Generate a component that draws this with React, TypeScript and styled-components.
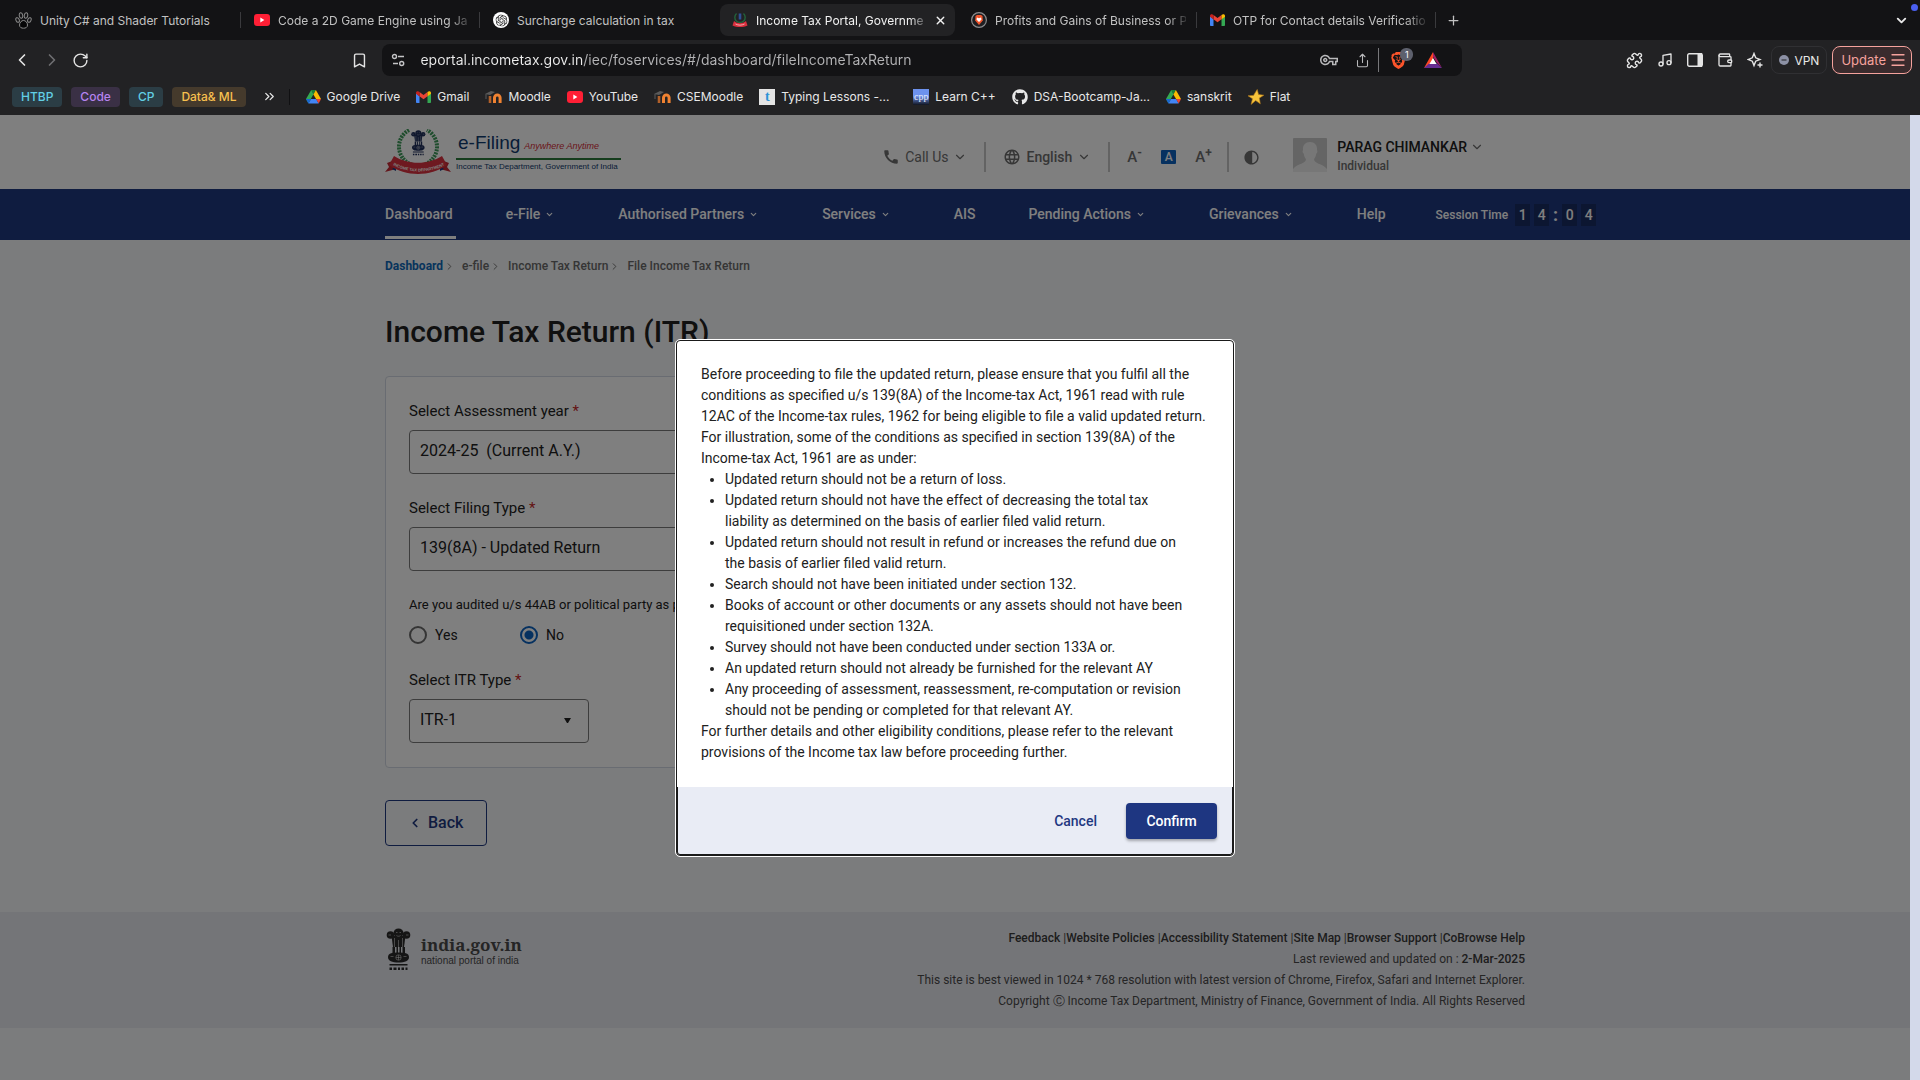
import React from "react";
import styled, { createGlobalStyle, css } from "styled-components";
import {
  Bookmark,
  ChevronDown,
  ChevronLeft,
  ChevronRight,
  ChevronsRight,
  Menu,
  Music,
  Plus,
  Puzzle,
  RotateCw,
  Share,
  Wallet,
  X,
} from "lucide-react";
import { MdCall, MdContrast, MdLanguage, MdOutlineVpnKey } from "react-icons/md";
import { FaGithub } from "react-icons/fa";
import { SiBrave, SiOpenai } from "react-icons/si";

const ui = `Inter, "Liberation Sans", sans-serif`;
const site = `Roboto, "Liberation Sans", sans-serif`;

const GlobalStyle = createGlobalStyle`
  *, *::before, *::after { box-sizing: border-box; }
  body { margin: 0; background: #222224; font-family: ${site}; }
  button, input, select { font: inherit; color: inherit; margin: 0; }
  button { background: none; border: 0; padding: 0; cursor: pointer; }
  a { color: inherit; text-decoration: none; }
  svg { display: block; flex: none; }
`;

const Shell = styled.div`
  display: flex;
  flex-direction: column;
  min-height: 100vh;
`;

/* ---------- browser chrome ---------- */

const Chrome = styled.header`
  font-family: ${ui};
  color: #e8e8e8;
  font-size: 12px;
`;

const TabStrip = styled.div`
  display: flex;
  align-items: center;
  height: 40px;
  padding-left: 3px;
  background: #131315;
`;

const Tab = styled.button<{ $active?: boolean; $line?: boolean }>`
  position: relative;
  display: flex;
  align-items: center;
  gap: 8px;
  width: 235px;
  height: 32px;
  margin: 0 4px 0 0;
  padding: 0 8px 0 12px;
  border-radius: 8px;
  color: ${(p) => (p.$active ? "#f2f2f2" : "#c2c2c2")};
  background: ${(p) => (p.$active ? "#222224" : "transparent")};
  ${(p) =>
    p.$line &&
    css`
      &::after {
        content: "";
        position: absolute;
        right: -3px;
        top: 8px;
        width: 1px;
        height: 16px;
        background: #3a3a3d;
      }
    `}
`;

const TabTitle = styled.span<{ $fade?: boolean }>`
  flex: 1;
  min-width: 0;
  white-space: nowrap;
  text-align: left;
  ${(p) => p.$fade && "mask-image: linear-gradient(90deg, #000 90%, rgba(0, 0, 0, 0.2));"}
`;

const NewTab = styled.button`
  display: flex;
  margin-left: 9px;
  color: #c2c2c2;
`;

const TabSearch = styled.button`
  position: relative;
  display: flex;
  margin: 0 11px 0 auto;
  &::after {
    content: "";
    position: absolute;
    right: -9px;
    top: -9px;
    width: 7px;
    height: 7px;
    border-radius: 50%;
    background: #4a5ff0;
  }
`;

const Toolbar = styled.div`
  display: flex;
  align-items: center;
  height: 40px;
  background: #222224;
`;

const NavButtons = styled.div`
  display: flex;
  align-items: center;
  gap: 10px;
  padding-left: 12px;
`;

const IconButton = styled.button<{ $faint?: boolean }>`
  display: flex;
  color: ${(p) => (p.$faint ? "#6f6f72" : "#e4e4e4")};
`;

const BookmarkButton = styled(IconButton)`
  margin: 0 14px 0 auto;
`;

const AddressBar = styled.div`
  display: flex;
  align-items: center;
  width: 1080px;
  height: 32px;
  padding: 0 20px 0 9px;
  border-radius: 8px;
  background: #131315;
  color: #b9b9bb;
`;

const Address = styled.input`
  flex: 1;
  min-width: 0;
  margin: 0 14px;
  padding: 0 0 1px;
  border: 0;
  outline: 0;
  font-size: 14px;
  color: transparent;
  background: linear-gradient(90deg, #ececec 162px, #b4b4b6 162px);
  background-clip: text;
`;

const AddressActions = styled.div`
  display: flex;
  align-items: center;
  gap: 17px;
`;

const Shield = styled.button`
  position: relative;
  display: flex;
  align-items: center;
  height: 24px;
  padding-left: 11px;
  margin-left: -9px;
  border-left: 1px solid #77777a;
  color: #fb542b;
`;

const ShieldCount = styled.span`
  position: absolute;
  right: -6px;
  top: 0;
  width: 13px;
  border-radius: 6px;
  background: #5d606d;
  color: #fff;
  font-size: 9px;
  line-height: 13px;
  text-align: center;
`;

const Extensions = styled.div`
  display: flex;
  flex: none;
  align-items: center;
  gap: 14px;
  margin-left: 164px;
  padding-right: 8px;
`;

const Vpn = styled.button`
  display: flex;
  align-items: center;
  gap: 5px;
  height: 28px;
  margin-left: -6px;
  padding: 0 7px;
  border: 1px solid #303033;
  border-radius: 8px;
`;

const Update = styled.button`
  display: flex;
  align-items: center;
  gap: 3px;
  height: 28px;
  margin-left: -9px;
  padding: 0 4px 0 8px;
  border: 1px solid #f5a29d;
  border-radius: 8px;
  background: #3a2b2d;
  color: #f5a29d;
  font-size: 13px;
`;

const BookmarkBar = styled.nav`
  display: flex;
  align-items: center;
  height: 35px;
  padding: 0 12px 2px;
  gap: 16px;
  background: #222224;
`;

const Folders = styled.div`
  display: flex;
  gap: 9px;
`;

const tones = {
  cyan: ["#2b3d45", "#62cfe4"],
  violet: ["#3a3045", "#b583ee"],
  amber: ["#453a2c", "#f8c04f"],
};

const Folder = styled.button<{ $tone: keyof typeof tones }>`
  height: 20px;
  padding: 0 9px;
  border-radius: 4px;
  font-weight: 500;
  background: ${(p) => tones[p.$tone][0]};
  color: ${(p) => tones[p.$tone][1]};
`;

const MoreFolders = styled.button`
  display: flex;
  align-items: center;
  height: 16px;
  padding-right: 12px;
  border-right: 1px solid #101012;
`;

const BookmarkLink = styled.a<{ $wide?: boolean }>`
  display: flex;
  align-items: center;
  gap: 6px;
  min-width: ${(p) => (p.$wide ? "138px" : "auto")};
  white-space: nowrap;
`;

/* ---------- portal ---------- */

const Viewport = styled.div`
  flex: 1;
  display: flex;
`;

const Page = styled.div`
  position: relative;
  flex: 1;
  display: flex;
  flex-direction: column;
  background: #f6f8fa;
  color: #212121;
`;

const ScrollTrack = styled.div`
  width: 10px;
  background: #d3d9ea;
`;

const Container = styled.div`
  width: 100%;
  max-width: 1140px;
  margin: 0 auto;
`;

const SiteHeader = styled.header`
  background: #fff;
`;

const HeaderRow = styled(Container)`
  display: flex;
  align-items: center;
  height: 74px;
`;

const Brand = styled.a`
  display: flex;
  align-items: center;
  gap: 5px;
`;

const BrandText = styled.div`
  width: 165px;
  font-family: "Liberation Sans", sans-serif;
  white-space: nowrap;
`;

const BrandTop = styled.div`
  display: flex;
  align-items: baseline;
  gap: 4px;
  padding-left: 2px;
  border-bottom: 2px solid #2a7a3a;
  color: #0f3a6e;
  font-size: 19px;
  line-height: 24px;
  em { color: #d42a35; font-size: 9px; }
`;

const BrandSub = styled.div`
  color: #0f3a6e;
  font-size: 8px;
  line-height: 14px;
`;

const Tools = styled.div`
  display: flex;
  align-items: center;
  gap: 17px;
  margin: 10px 41px 0 auto;
  color: #6e6e6e;
  font-size: 14px;
  line-height: 20px;
`;

const Tool = styled.button<{ $bold?: boolean }>`
  display: flex;
  align-items: center;
  gap: 5px;
  font-weight: ${(p) => (p.$bold ? 500 : 400)};
`;

const ContrastTool = styled(Tool)`
  margin-left: -3px;
`;

const Separator = styled.span`
  width: 2px;
  height: 30px;
  background: #c6c6c6;
`;

const FontSizes = styled.div`
  display: flex;
  align-items: center;
  gap: 19px;
`;

const SizeButton = styled.button<{ $on?: boolean }>`
  width: 15px;
  font-size: ${(p) => (p.$on ? 12 : 15)}px;
  line-height: 14px;
  font-weight: 500;
  white-space: nowrap;
  text-align: left;
  ${(p) => p.$on && "text-align: center; color: #fff; background: #0d63c0; border-radius: 1px;"}
  sup { font-size: 12px; font-weight: 700; line-height: 0; vertical-align: 5px; }
`;

const Profile = styled.div`
  display: flex;
  align-items: flex-start;
  gap: 10px;
  margin-left: 16px;
`;

const ProfileName = styled.button`
  display: flex;
  align-items: center;
  gap: 3px;
  color: #212121;
  font-size: 14px;
  font-weight: 500;
  line-height: 18px;
`;

const ProfileRole = styled.div`
  font-size: 12px;
  font-weight: 500;
  line-height: 20px;
`;

const MainNav = styled.nav`
  background: #1f3881;
`;

const NavRow = styled(Container)`
  display: flex;
  align-items: stretch;
  height: 51px;
  gap: 50px;
  white-space: nowrap;
  color: #fff;
  font-size: 14px;
  font-weight: 500;
`;

const NavItem = styled.a<{ $current?: boolean; $menu?: boolean }>`
  display: flex;
  align-items: center;
  gap: 5px;
  flex: none;
  padding: 3px ${(p) => (p.$menu ? 14 : 3)}px 0 0;
  border-bottom: 3px solid ${(p) => (p.$current ? "#fff" : "transparent")};
  margin-bottom: 1px;
`;

const Session = styled.div`
  display: flex;
  align-items: center;
  gap: 4px;
  flex: none;
  margin-left: -3px;
  font-size: 12px;
`;

const Digit = styled.span`
  width: 15px;
  background: #182c63;
  font-size: 14px;
  line-height: 22px;
  text-align: center;
`;

const Colon = styled.span`
  width: 5px;
  font-size: 18px;
  font-weight: 700;
`;

const Main = styled(Container).attrs({ as: "main" })`
  flex: 1;
`;

const Crumbs = styled.nav`
  display: flex;
  align-items: center;
  padding: 17px 0 16px;
  color: #6b6b6b;
  font-size: 12px;
  font-weight: 500;
  line-height: 18px;
  svg { margin: 0 7px 0 1px; }
  a:first-child { color: #0f69b9; font-weight: 700; }
`;

const Title = styled.h1`
  margin: 20px 0 24px;
  font-size: 30px;
  font-weight: 500;
  line-height: 41px;
`;

const Card = styled.section`
  width: 760px;
  max-width: 100%;
  padding: 24px 23px;
  border: 1px solid #d2d9e4;
  border-radius: 4px;
  background: #fff;
`;

const Field = styled.div`
  margin-bottom: 24px;
  &:last-child { margin-bottom: 0; }
`;

const Label = styled.label`
  display: block;
  margin-bottom: 9px;
  font-size: 15px;
  line-height: 20px;
  span { color: #c62828; }
`;

const SelectBox = styled.div<{ $short?: boolean }>`
  position: relative;
  width: ${(p) => (p.$short ? "180px" : "360px")};
  svg { position: absolute; right: 18px; top: 19px; }
`;

const Select = styled.select`
  width: 100%;
  height: 44px;
  padding: 0 10px 3px;
  appearance: none;
  border: 1px solid #7b7b7b;
  border-radius: 4px;
  background: #fff;
  font-size: 16px;
`;

const RadioGroup = styled.fieldset`
  margin: 0 0 25px;
  padding: 0;
  border: 0;
  legend { padding: 0; margin-bottom: 10px; font-size: 13px; line-height: 20px; }
`;

const Radios = styled.div`
  display: flex;
  gap: 60px;
`;

const RadioLabel = styled.label`
  display: flex;
  align-items: center;
  gap: 8px;
  font-size: 14px;
  line-height: 20px;
  width: 51px;
`;

const Radio = styled.input`
  flex: none;
  width: 18px;
  height: 18px;
  appearance: none;
  border: 2px solid #6b6b6b;
  border-radius: 50%;
  &:checked {
    border-color: #0d63c0;
    background: radial-gradient(circle, #0d63c0 4px, transparent 5px);
  }
`;

const BackButton = styled.button`
  display: flex;
  align-items: center;
  gap: 6px;
  height: 46px;
  margin: 32px 0;
  padding: 0 23px 1px 22px;
  border: 1px solid #1f3881;
  border-radius: 4px;
  color: #1f3881;
  font-size: 16px;
  font-weight: 500;
`;

const Footer = styled.footer`
  margin-bottom: 52px;
  background: #e9eaf1;
  color: #4b4b4b;
`;

const FooterRow = styled(Container)`
  display: flex;
  align-items: flex-start;
  justify-content: space-between;
  min-height: 116px;
  padding: 16px 0 0;
`;

const IndiaLink = styled.a`
  display: flex;
  align-items: center;
  gap: 9px;
  font: 10px/14px "Liberation Sans", sans-serif;
  span { padding-top: 5px; }
  strong { display: block; font: bold 17px/18px "Noto Serif", "Liberation Serif", serif; }
`;

const FooterText = styled.div`
  font-size: 12px;
  line-height: 21px;
  text-align: right;
  a, b { font-weight: 500; color: #3a3a3a; }
  p { margin: 0; }
`;

/* ---------- dialog ---------- */

const Backdrop = styled.div`
  position: absolute;
  inset: 0;
  display: flex;
  align-items: center;
  justify-content: center;
  background: rgba(0, 0, 0, 0.5);
`;

const Dialog = styled.div`
  width: 558px;
  border: 1px solid #1a1a1a;
  border-radius: 4px;
  outline: 1px solid #fff;
  background: #fff;
`;

const DialogBody = styled.div`
  padding: 23px 16px 24px 24px;
  font-size: 14px;
  line-height: 21px;
  white-space: nowrap;
  p { margin: 0; }
  ul { margin: 0; padding-left: 24px; }
`;

const DialogActions = styled.div`
  display: flex;
  align-items: center;
  justify-content: flex-end;
  gap: 29px;
  padding: 16px 15px 15px;
  border: 1px solid #1a1a1a;
  border-top: 0;
  border-radius: 0 0 3px 3px;
  background: #e9ecf5;
  font-size: 14px;
  font-weight: 500;
`;

const Cancel = styled.button`
  color: #1f3881;
`;

const Confirm = styled.button`
  width: 91px;
  height: 36px;
  border-radius: 4px;
  background: #1e3681;
  color: #fff;
  box-shadow: 0 2px 3px rgba(0, 0, 0, 0.3);
`;

/* ---------- drawings ---------- */

const YouTubeIcon = () => (
  <svg width="16" height="12" viewBox="0 0 16 12">
    <rect width="16" height="12" rx="3" fill="#ff1f35" />
    <path d="M6.3 3.6v4.8L10.4 6z" fill="#fff" />
  </svg>
);

const GmailIcon = () => (
  <svg width="15" height="12" viewBox="0 0 15 12">
    <path d="M0 2v9.2c0 .5.4.8.8.8h2.700V5.2z" fill="#4285f4" />
    <path d="M15 2v9.2c0 .5-.4.8-.8.8h-2.700V5.2z" fill="#34a853" />
    <path d="M3.500 5.200V1L7.500 4.100 11.500 1v4.200L7.500 8.300z" fill="#ea4335" />
    <path d="M0 2C0 .2 2 -.3 3.500 1v4.400L0 2.800z" fill="#c5221f" />
    <path d="M15 2c0-1.800-2-2.300-3.500-1v4.400L15 2.800z" fill="#fbbc04" />
  </svg>
);

const DriveIcon = () => (
  <svg width="15" height="14" viewBox="0 0 15 14">
    <path d="M5.200 0h4.700L7.500 4.500z" fill="#188038" />
    <path d="M5.200 0 0 9l2.400 4.300 5.100-9z" fill="#34a853" />
    <path d="M9.900 0 15 9h-4.900L7.400 4.400z" fill="#fbbc04" />
    <path d="M5 9h5.100l2.600 4.600H2.400z" fill="#4285f4" />
    <path d="M10.100 9H15l-2.300 4.600z" fill="#ea4335" />
    <path d="M0 9h5l-2.600 4.600z" fill="#1967d2" />
  </svg>
);

const MoodleIcon = () => (
  <svg width="17" height="14" viewBox="0 0 17 14" fill="none">
    <path d="M5 13V6" stroke="#b0602a" strokeWidth="2.600" />
    <path d="M9.500 13V7.800a2.800 2.800 0 0 1 5.600 0V13" stroke="#f08231" strokeWidth="3" />
    <path d="M0 4 6 1l4 1-5 3z" fill="#5a5a5a" />
    <path d="M1 4v5" stroke="#5a5a5a" />
  </svg>
);

const PawIcon = () => (
  <svg width="17" height="17" viewBox="0 0 17 17" fill="none" stroke="#8a8a8a" strokeWidth="1">
    <path d="M8.500 8.500c2 0 4 2 4 4.500 0 2.500-2 3.200-4 3.200S4.500 15.500 4.500 13c0-2.500 2-4.500 4-4.500z" fill="#060607" />
    <ellipse cx="2.600" cy="8" rx="1.600" ry="2.400" transform="rotate(-25 2.600 8)" />
    <ellipse cx="6" cy="3.500" rx="1.700" ry="2.800" transform="rotate(-10 6 3.500)" />
    <ellipse cx="11" cy="3.500" rx="1.700" ry="2.800" transform="rotate(10 11 3.500)" />
    <ellipse cx="14.400" cy="8" rx="1.600" ry="2.400" transform="rotate(25 14.400 8)" />
  </svg>
);

const ChatIcon = () => (
  <svg width="16" height="16" viewBox="0 0 16 16">
    <circle cx="8" cy="8" r="8" fill="#fff" />
    <SiOpenai x="2.500" y="2.500" width="11" height="11" color="#222" />
  </svg>
);

const PortalIcon = () => (
  <svg width="16" height="16" viewBox="0 0 16 16" fill="none">
    <path d="M4.500 1.500a5.200 5.200 0 1 0 7 0" stroke="#23633c" strokeWidth="1.400" />
    <path d="M8 1.500v6" stroke="#2f4f96" strokeWidth="2.600" />
    <path d="M2 9c3.500 3 8.500 3 12 0l1.500 4.500c-4.500 2-10.500 2-15 0z" fill="#d92f3d" />
    <path d="M3.500 12c3 1.500 6 1.500 9 0" stroke="#f7c9cc" strokeWidth=".8" />
  </svg>
);

const LionIcon = () => (
  <svg width="16" height="16" viewBox="0 0 16 16">
    <circle cx="8" cy="8" r="7.400" fill="#1f1f22" stroke="#8c8c8e" strokeWidth="1.200" />
    <path d="M4.500 4 6 3h4l1.500 1 .3 4.500L8 13 4.200 8.500z" fill="#f2552c" />
    <path d="m6 5.500 2 .7 2-.7.500 2L8 10 5.500 7.500z" fill="#fff" />
  </svg>
);

const TuneIcon = () => (
  <svg width="15" height="14" viewBox="0 0 15 14" fill="none" stroke="#c4c4c6" strokeWidth="1.400">
    <circle cx="3.500" cy="3.500" r="2" />
    <path d="M7 3.500h6M2 10.500h5" />
    <circle cx="10.700" cy="10.500" r="2" />
  </svg>
);

const TriangleIcon = () => (
  <svg width="18" height="16" viewBox="0 0 18 16">
    <path d="M9 0 0 16l9-5z" fill="#ff4724" />
    <path d="M9 0v5l4 6 5 5z" fill="#9e1f63" />
    <path d="M0 16h18l-5-4.500H5z" fill="#662d91" />
    <path d="m9 6 3.600 6H5.400z" fill="#fff" />
  </svg>
);

const PanelIcon = () => (
  <svg width="16" height="14" viewBox="0 0 16 14">
    <rect x=".7" y=".7" width="14.600" height="12.600" rx="1.500" fill="none" stroke="#e4e4e4" strokeWidth="1.400" />
    <path d="M10.500 0H15v14h-4.500z" fill="#e4e4e4" />
  </svg>
);

const SparkIcon = () => (
  <svg width="16" height="16" viewBox="0 0 16 16" fill="none" stroke="#e4e4e4" strokeWidth="1.400">
    <path d="M7 1.500 8.700 5.800 13 7.500 8.700 9.200 7 13.500 5.300 9.200 1 7.500 5.300 5.800z" />
    <path d="M13 10.500v5M10.500 13h5" />
  </svg>
);

const VpnDot = () => (
  <svg width="10" height="10" viewBox="0 0 10 10">
    <circle cx="5" cy="5" r="5" fill="#8c91a5" />
    <path d="M2.500 5h5" stroke="#3a3b42" strokeWidth="1.300" />
  </svg>
);

const StarIcon = () => (
  <svg width="16" height="16" viewBox="0 0 16 16">
    <path d="m9.200.5 1.300 5 5.300.7-4.500 2.900 1 5.700-4.600-3.200-4.600 3.800 1.400-5.700L0 6.800l5.500-.4z" fill="#f6c33b" stroke="#b97d1d" strokeWidth=".6" />
  </svg>
);

const TileIcon = styled.span<{ $cpp?: boolean }>`
  width: 16px;
  height: 16px;
  background: ${(p) => (p.$cpp ? "linear-gradient(#6d92ee 45%, #10141f)" : "#e4e4e4")};
  color: ${(p) => (p.$cpp ? "#e9eefc" : "#2c93d6")};
  font: ${(p) => (p.$cpp ? "10px/15px" : "bold 14px/15px")} "Liberation Serif", serif;
  text-align: center;
`;

const Lions = ({ color }: { color: string }) => (
  <g fill={color}>
    <ellipse cx="13" cy="5" rx="5" ry="4.600" />
    <circle cx="5" cy="7" r="3.800" />
    <circle cx="21" cy="7" r="3.800" />
    <path d="M6 8h14l-1.500 11h-11z" />
    <path d="M2.500 29c0-4 5-4.500 10.500-4.500S23.500 25 23.500 29s-4 5.500-10.500 5.500S2.500 33 2.500 29z" />
    <path d="M7 19h2.500v6H7zM11 19h1.500v6H11zM14 19h1.500v6H14zM17 19h2.500v6H17z" />
    <path d="M4 36h18v1.500H4zM4 39.500h2.500v2.500H4zM8 39.500h3v2.500H8zM12.500 39.500h2v2.500h-2zM16 39.500h2.500v2.500H16zM20 39.500h2v2.500h-2z" />
    <g stroke="#fff" strokeOpacity=".55" strokeWidth=".9" fill="none">
      <path d="M9 10v9M13 12v9M17 10v9M10.500 4.500h1.500M14 4.500h1.500M11 7.500c1.300 1 2.700 1 4 0M3 7h2.500M20.500 7H23" />
      <circle cx="13" cy="29.500" r="2.700" />
      <path d="M13 27v5M10.500 29.500h5M5 28.500h3M18 28.500h3" />
    </g>
  </g>
);

const Emblem = () => (
  <svg width="66" height="46" viewBox="0 0 66 46">
    <path d="M24 1a19 19 0 1 0 18 0" fill="none" stroke="#3f9a5b" strokeWidth="4" strokeDasharray="2 1" />
    <g transform="translate(25.500 1) scale(.6)">
      <Lions color="#20305c" />
    </g>
    <path d="M0 43l4-5-2-4 8-3 1 9zM66 43l-4-5 2-4-8-3-1 9z" fill="#c62a35" />
    <path d="m7 40 4 2V37zM59 40l-4 2V37z" fill="#1d3d86" />
    <path d="M9 27c14 9 34 9 48 0l5 9c-17 12-41 12-58 0z" fill="#dc3340" />
    <path id="ribbon" d="M8 36c15 8.500 36 8.500 52 0" fill="none" />
    <text fill="#fff" fontFamily="Liberation Sans, sans-serif" fontWeight="bold" fontSize="4">
      <textPath href="#ribbon">INCOME TAX DEPARTMENT</textPath>
    </text>
  </svg>
);

const StateEmblem = () => (
  <svg width="27" height="43" viewBox="0 0 26 43">
    <Lions color="#2b2b2b" />
  </svg>
);

const Avatar = () => (
  <svg width="34" height="34" viewBox="0 0 34 34">
    <rect width="34" height="34" rx="1" fill="#cacaca" />
    <path d="M17 4c4.500 0 7.500 3 7 8 .8 1 .4 3-.7 3.500-.5 3-1.300 4.500-2.300 5.500 0 5 8 4 13 10v3H0v-3c5-6 13-5 13-10-1-1-1.800-2.500-2.300-5.500C9.600 15 9.200 13 10 12c-.5-5 2.500-8 7-8z" fill="#efefef" />
  </svg>
);

/* ---------- data ---------- */

const tabs = [
  { title: "Unity C# and Shader Tutorials", icon: <PawIcon />, line: true },
  { title: "Code a 2D Game Engine using Ja", icon: <YouTubeIcon />, line: true, fade: true },
  { title: "Surcharge calculation in tax", icon: <ChatIcon /> },
  { title: "Income Tax Portal, Governme", icon: <PortalIcon />, active: true, fade: true },
  { title: "Profits and Gains of Business or P", icon: <LionIcon />, line: true, fade: true },
  { title: "OTP for Contact details Verificatio", icon: <GmailIcon />, line: true, fade: true },
];

const bookmarks = [
  { title: "Google Drive", icon: <DriveIcon /> },
  { title: "Gmail", icon: <GmailIcon /> },
  { title: "Moodle", icon: <MoodleIcon /> },
  { title: "YouTube", icon: <YouTubeIcon /> },
  { title: "CSEMoodle", icon: <MoodleIcon /> },
  { title: "Typing Lessons -...", icon: <TileIcon>t</TileIcon>, wide: true },
  { title: "Learn C++", icon: <TileIcon $cpp>cpp</TileIcon> },
  { title: "DSA-Bootcamp-Ja...", icon: <FaGithub size={16} /> },
  { title: "sanskrit", icon: <DriveIcon /> },
  { title: "Flat", icon: <StarIcon /> },
];

const navItems = [
  { title: "Dashboard", current: true },
  { title: "e-File", menu: true },
  { title: "Authorised Partners", menu: true },
  { title: "Services", menu: true },
  { title: "AIS" },
  { title: "Pending Actions", menu: true },
  { title: "Grievances", menu: true },
  { title: "Help" },
];

const footerLinks = [
  "Feedback",
  "Website Policies",
  "Accessibility Statement",
  "Site Map",
  "Browser Support",
  "CoBrowse Help",
];

const conditions = [
  ["Updated return should not be a return of loss."],
  ["Updated return should not have the effect of decreasing the total tax", "liability as determined on the basis of earlier filed valid return."],
  ["Updated return should not result in refund or increases the refund due on", "the basis of earlier filed valid return."],
  ["Search should not have been initiated under section 132."],
  ["Books of account or other documents or any assets should not have been", "requisitioned under section 132A."],
  ["Survey should not have been conducted under section 133A or."],
  ["An updated return should not already be furnished for the relevant AY"],
  ["Any proceeding of assessment, reassessment, re-computation or revision", "should not be pending or completed for that relevant AY."],
];

const Lines = ({ of }: { of: string[] }) => (
  <>
    {of.map((line, i) => (
      <React.Fragment key={line}>
        {i > 0 && <br />}
        {line}
      </React.Fragment>
    ))}
  </>
);

const BrowserChrome = () => (
  <Chrome>
    <TabStrip>
      {tabs.map((t) => (
        <Tab key={t.title} $active={t.active} $line={t.line}>
          {t.icon}
          <TabTitle $fade={t.fade}>{t.title}</TabTitle>
          {t.active && <X size={13} strokeWidth={2.5} />}
        </Tab>
      ))}
      <NewTab aria-label="New tab"><Plus size={15} /></NewTab>
      <TabSearch aria-label="Search tabs"><ChevronDown size={15} strokeWidth={3} /></TabSearch>
    </TabStrip>
    <Toolbar>
      <NavButtons>
        <IconButton aria-label="Back"><ChevronLeft size={20} /></IconButton>
        <IconButton aria-label="Forward" $faint><ChevronRight size={20} /></IconButton>
        <IconButton aria-label="Reload"><RotateCw size={17} /></IconButton>
      </NavButtons>
      <BookmarkButton aria-label="Bookmark this page"><Bookmark size={17} /></BookmarkButton>
      <AddressBar>
        <TuneIcon />
        <Address aria-label="Address" defaultValue="eportal.incometax.gov.in/iec/foservices/#/dashboard/fileIncomeTaxReturn" />
        <AddressActions>
          <MdOutlineVpnKey size={18} />
          <Share size={15} strokeWidth={1.7} />
          <Shield aria-label="Shields">
            <SiBrave size={17} />
            <ShieldCount>1</ShieldCount>
          </Shield>
          <TriangleIcon />
        </AddressActions>
      </AddressBar>
      <Extensions>
        <IconButton aria-label="Extensions"><Puzzle size={17} /></IconButton>
        <IconButton aria-label="Media"><Music size={16} /></IconButton>
        <IconButton aria-label="Side panel"><PanelIcon /></IconButton>
        <IconButton aria-label="Wallet"><Wallet size={16} /></IconButton>
        <IconButton aria-label="Assistant"><SparkIcon /></IconButton>
        <Vpn><VpnDot />VPN</Vpn>
        <Update>Update<Menu size={18} strokeWidth={1.7} /></Update>
      </Extensions>
    </Toolbar>
    <BookmarkBar>
      <Folders>
        <Folder $tone="cyan">HTBP</Folder>
        <Folder $tone="violet">Code</Folder>
        <Folder $tone="cyan">CP</Folder>
        <Folder $tone="amber">Data&amp; ML</Folder>
      </Folders>
      <MoreFolders aria-label="More folders"><ChevronsRight size={15} /></MoreFolders>
      {bookmarks.map((b) => (
        <BookmarkLink key={b.title} href="#" $wide={b.wide}>{b.icon}{b.title}</BookmarkLink>
      ))}
    </BookmarkBar>
  </Chrome>
);

const PortalHeader = () => (
  <SiteHeader>
    <HeaderRow>
      <Brand href="#">
        <Emblem />
        <BrandText>
          <BrandTop>e-Filing <em>Anywhere Anytime</em></BrandTop>
          <BrandSub>Income Tax Department, Government of India</BrandSub>
        </BrandText>
      </Brand>
      <Tools>
        <Tool><MdCall size={18} />Call Us<ChevronDown size={14} /></Tool>
        <Separator />
        <Tool $bold><MdLanguage size={18} />English<ChevronDown size={14} /></Tool>
        <Separator />
        <FontSizes>
          <SizeButton>A<sup>-</sup></SizeButton>
          <SizeButton $on>A</SizeButton>
          <SizeButton>A<sup>+</sup></SizeButton>
        </FontSizes>
        <Separator />
        <ContrastTool aria-label="Contrast"><MdContrast size={17} /></ContrastTool>
        <Profile>
          <Avatar />
          <div>
            <ProfileName>PARAG CHIMANKAR<ChevronDown size={14} color="#6e6e6e" /></ProfileName>
            <ProfileRole>Individual</ProfileRole>
          </div>
        </Profile>
      </Tools>
    </HeaderRow>
  </SiteHeader>
);

export default function App() {
  return (
    <Shell>
      <GlobalStyle />
      <BrowserChrome />
      <Viewport>
        <Page>
          <PortalHeader />
          <MainNav>
            <NavRow>
              {navItems.map((n) => (
                <NavItem key={n.title} href="#" $current={n.current} $menu={n.menu}>
                  {n.title}
                  {n.menu && <ChevronDown size={9} strokeWidth={3} />}
                </NavItem>
              ))}
              <Session>
                Session Time&nbsp;
                <Digit>1</Digit>
                <Digit>4</Digit>
                <Colon>:</Colon>
                <Digit>0</Digit>
                <Digit>4</Digit>
              </Session>
            </NavRow>
          </MainNav>
          <Main>
            <Crumbs>
              <a href="#">Dashboard</a>
              <ChevronRight size={11} />
              <a href="#">e-file</a>
              <ChevronRight size={11} />
              <a href="#">Income Tax Return</a>
              <ChevronRight size={11} />
              <span>File Income Tax Return</span>
            </Crumbs>
            <Title>Income Tax Return (ITR)</Title>
            <Card>
              <Field>
                <Label htmlFor="year">Select Assessment year <span>*</span></Label>
                <SelectBox>
                  <Select id="year"><option>{"2024-25\u00a0 (Current A.Y.)"}</option></Select>
                </SelectBox>
              </Field>
              <Field>
                <Label htmlFor="filing">Select Filing Type <span>*</span></Label>
                <SelectBox>
                  <Select id="filing"><option>139(8A) - Updated Return</option></Select>
                </SelectBox>
              </Field>
              <RadioGroup>
                <legend>Are you audited u/s 44AB or political party as per</legend>
                <Radios>
                  <RadioLabel><Radio type="radio" name="audit" />Yes</RadioLabel>
                  <RadioLabel><Radio type="radio" name="audit" defaultChecked />No</RadioLabel>
                </Radios>
              </RadioGroup>
              <Field>
                <Label htmlFor="itr">Select ITR Type <span>*</span></Label>
                <SelectBox $short>
                  <Select id="itr"><option>ITR-1</option></Select>
                  <svg width="7" height="5" viewBox="0 0 7 5"><path d="M0 0h7L4 5H3z" fill="#212121" /></svg>
                </SelectBox>
              </Field>
            </Card>
            <BackButton><ChevronLeft size={14} strokeWidth={3} />Back</BackButton>
          </Main>
          <Footer>
            <FooterRow>
              <IndiaLink href="#">
                <StateEmblem />
                <span><strong>india.gov.in</strong>national portal of india</span>
              </IndiaLink>
              <FooterText>
                <p>
                  {footerLinks.map((l, i) => (
                    <React.Fragment key={l}>{i > 0 && " |"}<a href="#">{l}</a></React.Fragment>
                  ))}
                </p>
                <p>Last reviewed and updated on : <b>2-Mar-2025</b></p>
                <p>This site is best viewed in 1024 * 768 resolution with latest version of Chrome, Firefox, Safari and Internet Explorer.</p>
                <p>Copyright Ⓒ Income Tax Department, Ministry of Finance, Government of India. All Rights Reserved</p>
              </FooterText>
            </FooterRow>
          </Footer>
          <Backdrop>
            <Dialog role="dialog" aria-modal="true">
              <DialogBody>
                <p>
                  <Lines
                    of={[
                      "Before proceeding to file the updated return, please ensure that you fulfil all the",
                      "conditions as specified u/s 139(8A) of the Income-tax Act, 1961 read with rule",
                      "12AC of the Income-tax rules, 1962 for being eligible to file a valid updated return.",
                      "For illustration, some of the conditions as specified in section 139(8A) of the",
                      "Income-tax Act, 1961 are as under:",
                    ]}
                  />
                </p>
                <ul>
                  {conditions.map((c) => (
                    <li key={c[0]}><Lines of={c} /></li>
                  ))}
                </ul>
                <p>
                  <Lines
                    of={[
                      "For further details and other eligibility conditions, please refer to the relevant",
                      "provisions of the Income tax law before proceeding further.",
                    ]}
                  />
                </p>
              </DialogBody>
              <DialogActions>
                <Cancel>Cancel</Cancel>
                <Confirm>Confirm</Confirm>
              </DialogActions>
            </Dialog>
          </Backdrop>
        </Page>
        <ScrollTrack />
      </Viewport>
    </Shell>
  );
}
